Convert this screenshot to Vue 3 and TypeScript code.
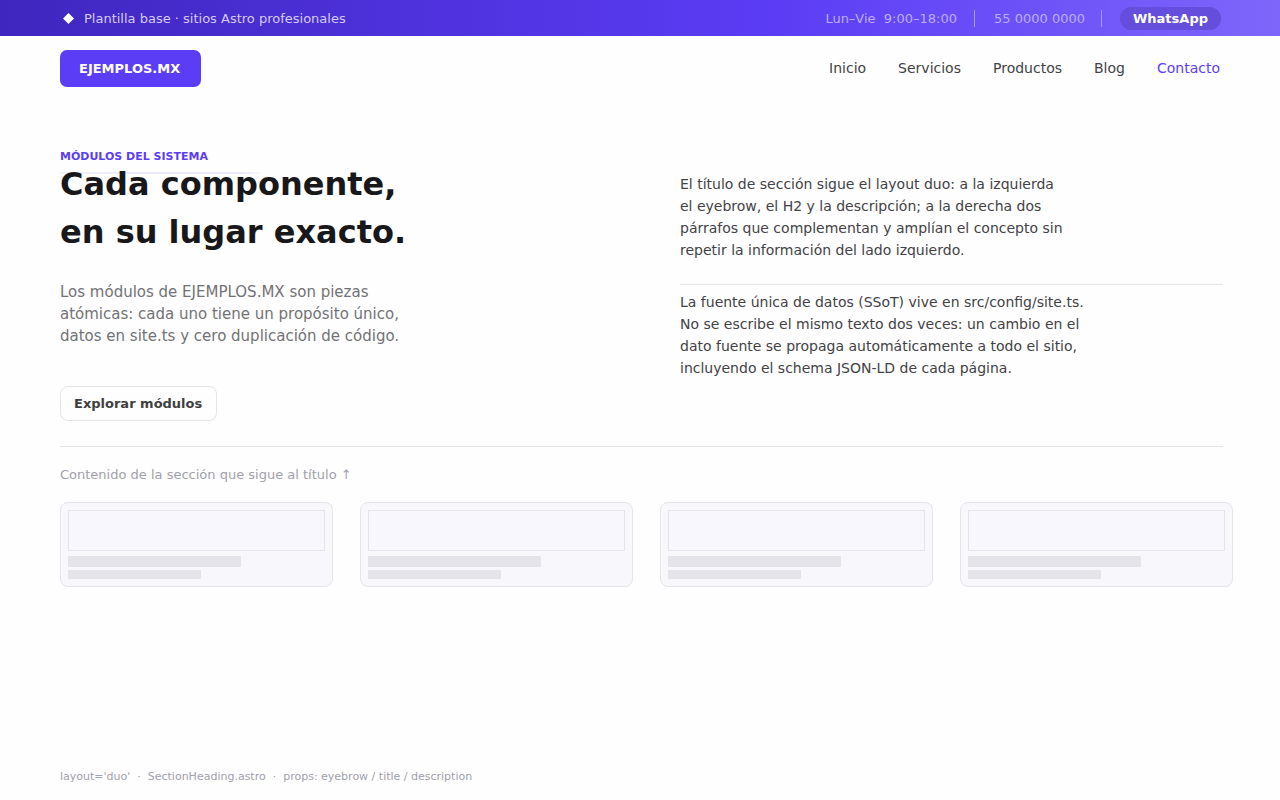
<script setup lang="ts">
interface NavItem {
  label: string
  href: string
  active?: boolean
}

const navItems: NavItem[] = [
  { label: 'Inicio', href: '#inicio' },
  { label: 'Servicios', href: '#servicios' },
  { label: 'Productos', href: '#productos' },
  { label: 'Blog', href: '#blog' },
  { label: 'Contacto', href: '#contacto', active: true },
]

const titleLines: string[] = ['Cada componente,', 'en su lugar exacto.']

const descriptionLines: string[] = [
  'Los módulos de EJEMPLOS.MX son piezas',
  'atómicas: cada uno tiene un propósito único,',
  'datos en site.ts y cero duplicación de código.',
]

const paragraphs: string[][] = [
  [
    'El título de sección sigue el layout duo: a la izquierda',
    'el eyebrow, el H2 y la descripción; a la derecha dos',
    'párrafos que complementan y amplían el concepto sin',
    'repetir la información del lado izquierdo.',
  ],
  [
    'La fuente única de datos (SSoT) vive en src/config/site.ts.',
    'No se escribe el mismo texto dos veces: un cambio en el',
    'dato fuente se propaga automáticamente a todo el sitio,',
    'incluyendo el schema JSON-LD de cada página.',
  ],
]

const cardCount = 4
</script>

<template>
  <div class="page">
    <div class="topbar">
      <div class="tagline">
        <svg class="diamond" viewBox="0 0 12 12" aria-hidden="true">
          <path d="M6.5 1 12 6.5 6.5 12 1 6.5Z" fill="#fff" />
        </svg>
        <span>Plantilla base · sitios Astro profesionales</span>
      </div>
      <div class="contact">
        <span>Lun–Vie&nbsp; 9:00–18:00</span>
        <span class="separator"></span>
        <a class="phone" href="tel:5500000000">55 0000 0000</a>
        <span class="separator"></span>
        <a class="whatsapp" href="#whatsapp">WhatsApp</a>
      </div>
    </div>

    <header class="header">
      <a class="logo" href="#inicio">EJEMPLOS.MX</a>
      <nav class="nav">
        <a
          v-for="item in navItems"
          :key="item.label"
          :href="item.href"
          :class="{ active: item.active }"
        >{{ item.label }}</a>
      </nav>
    </header>

    <main>
      <section class="duo">
        <div class="lead">
          <p class="eyebrow">MÓDULOS DEL SISTEMA</p>
          <h2 class="title">
            <span v-for="line in titleLines" :key="line" class="line">{{ line }}</span>
          </h2>
          <p class="description">
            <span v-for="line in descriptionLines" :key="line" class="line">{{ line }}</span>
          </p>
          <button class="explore" type="button">Explorar módulos</button>
        </div>
        <div class="aside">
          <p v-for="(lines, index) in paragraphs" :key="index">
            <span v-for="line in lines" :key="line" class="line">{{ line }}</span>
          </p>
        </div>
      </section>

      <section class="content">
        <p class="caption">Contenido de la sección que sigue al título ↑</p>
        <div class="cards">
          <article v-for="n in cardCount" :key="n" class="card">
            <div class="media"></div>
            <div class="bar"></div>
            <div class="bar short"></div>
          </article>
        </div>
      </section>
    </main>

    <footer class="footer">layout='duo'&nbsp; ·&nbsp; SectionHeading.astro&nbsp; ·&nbsp; props: eyebrow / title / description</footer>
  </div>
</template>

<style>
body {
  margin: 0;
  background: #fefefe;
}
</style>

<style scoped>
.page {
  display: flex;
  flex-direction: column;
  min-height: 100vh;
  font-family: "DejaVu Sans", sans-serif;
  color: #424246;
}

p,
h2 {
  margin: 0;
}

a {
  color: inherit;
  text-decoration: none;
}

.line {
  display: block;
}

.topbar {
  display: flex;
  align-items: center;
  justify-content: space-between;
  height: 36px;
  padding: 0 59px 0 60px;
  background: linear-gradient(90deg, #3f26be, #5b3cf5 60%, #7e66fa);
  font-size: 13px;
  color: #d3ccf6;
}

.tagline {
  display: flex;
  align-items: center;
  gap: 10px;
  padding-left: 2px;
}

.diamond {
  width: 12px;
  height: 12px;
}

.contact {
  display: flex;
  align-items: center;
  color: #bbadfb;
}

.separator {
  width: 1px;
  height: 17px;
  margin: 0 18px 0 16px;
  background: #a897fb;
}

.separator:first-of-type,
.contact > .separator:nth-child(2) {
  margin: 0 19px 0 17px;
}

.whatsapp {
  padding: 0 13px;
  border-radius: 12px;
  background: #644edb;
  font-weight: bold;
  line-height: 23px;
  color: #fff;
}

.header {
  display: flex;
  align-items: center;
  justify-content: space-between;
  padding: 14px 60px;
}

.logo {
  padding: 0 21px 0 19px;
  border-radius: 7px;
  background: #5b3df5;
  font-size: 13px;
  font-weight: bold;
  line-height: 37px;
  color: #fff;
}

.nav {
  display: flex;
  gap: 32px;
  padding-bottom: 2px;
  font-size: 14px;
}

.nav .active {
  color: #5b3df5;
}

.duo {
  display: grid;
  grid-template-columns: 1fr 1fr;
  column-gap: 77px;
  margin: 0 57px 0 60px;
  padding: 49px 0 25px;
  border-bottom: 1px solid #e4e4ec;
}

.eyebrow {
  position: relative;
  height: 10px;
  font-size: 11px;
  font-weight: bold;
  line-height: 14px;
  color: #5b3df5;
}

.eyebrow::after {
  content: "";
  position: absolute;
  top: 22px;
  left: 0;
  width: 200px;
  height: 2px;
  background: linear-gradient(90deg, #f5f4fa, #eae8fd 40%, #eae8fd 90%, #f8f7fe);
}

.title {
  position: relative;
  font-size: 32px;
  line-height: 48px;
  color: #18181b;
}

.description {
  margin-top: 25px;
  font-size: 15px;
  line-height: 22px;
  color: #727276;
}

.explore {
  height: 35px;
  margin-top: 39px;
  padding: 0 14px 0 13px;
  border: 1px solid #e4e4ea;
  border-radius: 8px;
  background: #fefefe;
  font-family: inherit;
  font-size: 13px;
  font-weight: bold;
  color: #3f3f42;
}

.aside {
  padding-top: 23px;
  font-size: 14px;
  line-height: 22px;
}

.aside p + p {
  margin-top: 23px;
  padding-top: 6px;
  border-top: 1px solid #e4e4e8;
}

.content {
  margin: 0 47px 0 60px;
}

.caption {
  padding: 18px 0 17px;
  font-size: 13px;
  line-height: 20px;
  color: #a1a0ac;
}

.cards {
  display: grid;
  grid-template-columns: repeat(4, 1fr);
  gap: 27px;
}

.card {
  padding: 7px;
  border: 1px solid #e5e4eb;
  border-radius: 8px;
  background: #f8f7fb;
}

.media {
  height: 39px;
  border: 1px solid #e5e4eb;
  background: #f8f7fd;
}

.bar {
  width: 67.4%;
  height: 11px;
  margin-top: 5px;
  background: #e5e4ea;
}

.bar.short {
  width: 51.8%;
  height: 9px;
  margin-top: 3px;
}

.footer {
  margin-top: auto;
  padding: 20px 60px 16px;
  font-size: 11px;
  line-height: 14px;
  color: #a1a0ac;
}
</style>
